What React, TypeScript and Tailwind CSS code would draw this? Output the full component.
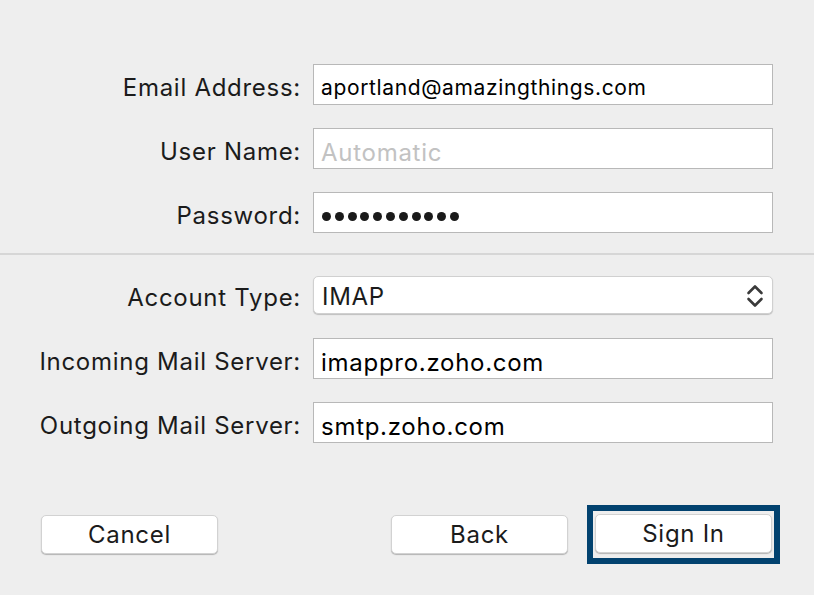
import React from "react";

const font = { fontFamily: "Inter, 'Liberation Sans', sans-serif" };

function Label({ text }: { text: string }) {
  return (
    <div className="w-[301px] h-full pt-[12px] text-right text-[24px] tracking-[0.03em] text-[#1b1b1b] leading-none">
      {text}
    </div>
  );
}

function Row({ label, children }: { label: string; children: React.ReactNode }) {
  return (
    <div className="flex items-start h-[41px]">
      <Label text={label} />
      <div className="ml-3 w-[460px] h-full">{children}</div>
    </div>
  );
}

function Field({ value, placeholder, small }: { value?: string; placeholder?: string; small?: boolean }) {
  return (
    <div
      className={
        small
          ? "h-full bg-white border border-[#b8b8b8] pl-[7px] pt-[12px] text-[21px] tracking-[0.03em] leading-none whitespace-nowrap"
          : "h-full bg-white border border-[#b8b8b8] pl-[7px] pt-[12px] text-[24px] tracking-[0.03em] leading-none whitespace-nowrap"
      }
    >
      {value ? <span className="text-black">{value}</span> : <span className="text-[#c2c2c2]">{placeholder}</span>}
    </div>
  );
}

function Btn({ label }: { label: string }) {
  return (
    <div className="w-[177px] h-[39px] bg-white rounded-[5px] border border-[#d2d2d2] shadow-[0_1px_1px_rgba(0,0,0,0.25)] flex justify-center pt-[7px] text-[24px] tracking-[0.03em] text-[#1b1b1b] leading-none">
      {label}
    </div>
  );
}

export default function App() {
  return (
    <div className="w-[814px] h-[595px] bg-[#eeeeee] overflow-hidden flex flex-col" style={font}>
      <div className="pt-[64px] flex flex-col gap-[23px]">
        <Row label="Email Address:">
          <Field value="aportland@amazingthings.com" small />
        </Row>
        <Row label="User Name:">
          <Field placeholder="Automatic" />
        </Row>
        <Row label="Password:">
          <div className="h-full bg-white border border-[#b8b8b8] flex items-start pl-[8px] pt-[19px] gap-[3.8px]">
            {Array.from({ length: 11 }).map((_, i) => (
              <div key={i} className="w-[9px] h-[9px] rounded-full bg-[#1a1a1a]" />
            ))}
          </div>
        </Row>
      </div>
      <div className="mt-[20px] h-[2px] bg-[#d6d6d6]" />
      <div className="mt-[21px] flex items-start h-[38px]">
        <div className="w-[301px] h-full pt-[10px] text-right text-[24px] tracking-[0.03em] text-[#1b1b1b] leading-none">
          Account Type:
        </div>
        <div className="ml-3 w-[460px] h-full bg-white rounded-[5px] border border-[#d0d0d0] shadow-[0_1px_1px_rgba(0,0,0,0.2)] flex items-start pl-[8px] pr-[8px] text-[24px] tracking-[0.03em] leading-none">
          <span className="flex-1 pt-[8px] text-[#1b1b1b]">IMAP</span>
          <svg className="mt-[7px]" width="18" height="24" viewBox="0 0 18 24" fill="none" stroke="#3a3a3a" strokeWidth="2.6" strokeLinecap="round" strokeLinejoin="round">
            <path d="M2.5 9 L9 2.5 L15.5 9" />
            <path d="M2.5 15 L9 21.5 L15.5 15" />
          </svg>
        </div>
      </div>
      <div className="mt-[24px] flex flex-col gap-[23px]">
        <Row label="Incoming Mail Server:">
          <Field value="imappro.zoho.com" />
        </Row>
        <Row label="Outgoing Mail Server:">
          <Field value="smtp.zoho.com" />
        </Row>
      </div>
      <div className="mt-[62px] flex items-center">
        <div className="ml-[41px]">
          <Btn label="Cancel" />
        </div>
        <div className="ml-[173px]">
          <Btn label="Back" />
        </div>
        <div className="ml-[19px] border-[6px] border-[#02426f] px-[2px] pt-[3px] pb-[5px]">
          <Btn label="Sign In" />
        </div>
      </div>
    </div>
  );
}
